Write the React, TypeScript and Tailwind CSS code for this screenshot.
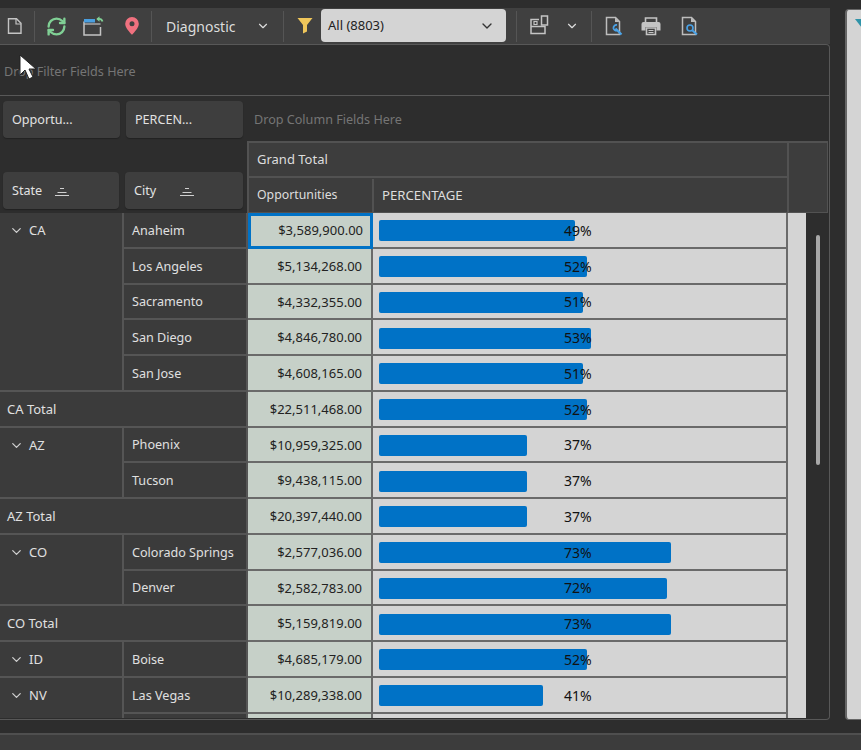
import { ChevronDown, RefreshCw } from "lucide-react";

const Groups = [
  { state: "CA", cities: [["Anaheim", "$3,589,900.00", 49], ["Los Angeles", "$5,134,268.00", 52], ["Sacramento", "$4,332,355.00", 51], ["San Diego", "$4,846,780.00", 53], ["San Jose", "$4,608,165.00", 51]], total: ["$22,511,468.00", 52], span: "row-span-5" },
  { state: "AZ", cities: [["Phoenix", "$10,959,325.00", 37], ["Tucson", "$9,438,115.00", 37]], total: ["$20,397,440.00", 37], span: "row-span-2" },
  { state: "CO", cities: [["Colorado Springs", "$2,577,036.00", 73], ["Denver", "$2,582,783.00", 72]], total: ["$5,159,819.00", 73], span: "row-span-2" },
  { state: "ID", cities: [["Boise", "$4,685,179.00", 52]], span: "row-span-1" },
  { state: "NV", cities: [["Las Vegas", "$10,289,338.00", 41], ["", "", 0]], span: "row-span-2" },
];

function Sep({ ml }: { ml: string }) {
  return <div className={`${ml} w-px h-[31px] bg-[#555555]`} />;
}

function DataCells({ amount, pct, selected }: { amount: string; pct: number; selected?: boolean }) {
  return (
    <>
      <div className={`flex items-center justify-end bg-[#c6d0c8] text-[#222222] text-[13px] ${selected ? "border-[3px] border-[#0072c6] pr-[7px]" : "border-b-2 border-r-2 border-[#6a6a6a] pt-[2px] pr-[9px]"}`}>
        {amount}
      </div>
      <div className="relative flex items-center pl-[6px] pt-[2px] bg-[#d4d4d4] border-b-2 border-r-2 border-[#6a6a6a]">
        {pct > 0 && <div className="h-[21px] rounded-[2px] bg-[#0072c6]" style={{ width: pct * 4 }} />}
        {pct > 0 && <span className="absolute left-[191px] text-[14px] leading-[20px] text-[#111111]">{pct}%</span>}
      </div>
    </>
  );
}

function FieldChip({ label, labelW, sort, w }: { label: string; labelW?: string; sort?: boolean; w: string }) {
  return (
    <div className={`${w} h-[37px] flex items-center pl-[9px] pt-[2px] rounded-[4px] bg-[#3e3e3e] shadow-[0_1px_1px_#222222] text-[#e2e2e2]`}>
      <span className={labelW}>{label}</span>
      {sort && (
        <svg width="16" height="10" viewBox="0 0 16 10" stroke="#d0d0d0" fill="none">
          <path d="M6 1.500h4M3.500 5.500h9M1 8.500h14" />
        </svg>
      )}
    </div>
  );
}

function DocIcon({ children }: { children: React.ReactNode }) {
  return (
    <svg width="20" height="20" viewBox="0 0 20 20" fill="none">
      <path d="M2.500 1.500h9l4 4v13h-13z" stroke="#bdbdbd" strokeWidth="1.500" />
      <path d="M11 1.500v4.500h4.500" fill="#bdbdbd" />
      {children}
    </svg>
  );
}

function Toolbar() {
  return (
    <div className="h-[36px] shrink-0 flex items-center bg-[#404040]">
      <svg width="20" height="20" viewBox="0 0 20 20" fill="none" className="ml-[5px]">
        <path d="M3.500 2.700h8l4.500 4.500v10.100h-12.500z" stroke="#c4c4c4" strokeWidth="1.400" />
        <path d="M11 3v5h5" stroke="#c4c4c4" strokeWidth="1.200" />
      </svg>
      <Sep ml="ml-[9px]" />
      <RefreshCw size={21} strokeWidth={2.700} className="ml-[11px] text-[#80d095]" />
      <svg width="21" height="21" viewBox="0 0 21 21" fill="none" className="ml-[16px]">
        <path d="M1 5.500v13.500h16.500v-8" stroke="#c4c4c4" strokeWidth="1.500" />
        <path d="M1 3h11v3.500h-11z" fill="#4a9fe0" />
        <path d="M1 8h16.500" stroke="#c4c4c4" strokeWidth="1.200" />
        <path d="M19.500 5.500c-.500-2-2.500-3-5-2.500" stroke="#80d095" strokeWidth="1.800" />
        <path d="M13.300 3l3.200-2.700v5.400z" fill="#80d095" />
      </svg>
      <svg width="20" height="20" viewBox="0 0 20 20" className="ml-[18px]">
        <path fillRule="evenodd" d="M10 1a6.800 6.800 0 0 0-6.800 6.800c0 3.900 4.200 8.300 6.800 11 2.600-2.700 6.800-7.100 6.800-11A6.800 6.800 0 0 0 10 1zm0 4.300a2.500 2.500 0 1 1 0 5 2.500 2.500 0 0 1 0-5z" fill="#f0717f" />
      </svg>
      <Sep ml="ml-[9px]" />
      <span className="ml-[14px] w-[90px] text-[14px] text-[#dddddd]">Diagnostic</span>
      <ChevronDown size={14} className="text-[#dddddd]" />
      <Sep ml="ml-[13px]" />
      <svg width="20" height="20" viewBox="0 0 20 20" className="ml-[11px] -mt-[2px]">
        <path d="M2.500 3h15l-5.500 7v6.500l-4 2v-8.500z" fill="#efc65a" />
      </svg>
      <div className="ml-[6px] w-[185px] h-[33px] -mt-[1px] flex items-center justify-between pl-[7px] pr-[11px] rounded-[4px] bg-[#d4d4d4] text-[13px] text-[#222222]">
        <span>All (8803)</span>
        <ChevronDown size={16} className="text-[#333333]" />
      </div>
      <Sep ml="ml-[10px]" />
      <svg width="20" height="20" viewBox="0 0 20 20" fill="none" stroke="#c4c4c4" strokeWidth="1.500" className="ml-[12px] -mt-[3px]">
        <path d="M10 4.500h-8v14h14v-7h-14" />
        <path d="M12.500 1h6v9h-6z" />
        <path d="M5 6.500h3v3h-3z" strokeWidth="1.200" />
      </svg>
      <ChevronDown size={14} className="ml-[16px] text-[#dddddd]" />
      <Sep ml="ml-[12px]" />
      <div className="ml-[12px]">
        <DocIcon>
          <path d="M17.500 18.500l-6-6" stroke="#4aa3e8" strokeWidth="2.200" />
          <path d="M13 9a3 3 0 0 0-3.500 3.500c.500 1.500 2 2.500 3.500 2" stroke="#4aa3e8" strokeWidth="1.800" />
        </DocIcon>
      </div>
      <svg width="20" height="20" viewBox="0 0 20 20" className="ml-[17px]" fill="none">
        <path d="M4.500 6v-4h11v4" stroke="#c4c4c4" strokeWidth="1.600" />
        <path d="M2.500 6h15a2 2 0 0 1 2 2v6.500h-4v-3.500h-11v3.500h-4v-6.500a2 2 0 0 1 2-2z" fill="#c4c4c4" />
        <path d="M5.500 12h9v6.500h-9z" stroke="#c4c4c4" strokeWidth="1.600" />
        <path d="M7.500 14.500h5M7.500 16.500h5" stroke="#c4c4c4" />
      </svg>
      <div className="ml-[19px]">
        <DocIcon>
          <circle cx="10" cy="12" r="3" stroke="#4aa3e8" strokeWidth="1.600" />
          <path d="M12.500 14.500l4.500 4" stroke="#4aa3e8" strokeWidth="2" />
        </DocIcon>
      </div>
    </div>
  );
}

export default function App() {
  return (
    <div className="relative w-[861px] h-[750px] overflow-hidden bg-[#2d2d2d] text-[12.6px] font-['Noto_Sans',sans-serif]">
      <div className="h-[8px]" />
      <div className="flex h-[712px]">
        <div className="w-[830px] shrink-0 flex flex-col">
          <Toolbar />
          <div className="flex-1 min-h-0 flex flex-col border-t border-r border-b border-[#585858] rounded-tr-[4px] rounded-br-[4px]">
            <div className="h-[51px] flex items-center pl-[4px] pt-[4px] shrink-0 border-b border-[#585858] text-[#757575]">
              Drop Filter Fields Here
            </div>
            <div className="h-[45px] shrink-0 flex items-center pl-[3px] pt-[2px] gap-[6px]">
              <FieldChip label="Opportu..." w="w-[117px]" />
              <FieldChip label="PERCEN..." w="w-[117px]" />
              <span className="ml-[5px] pt-[2px] text-[#757575]">Drop Column Fields Here</span>
            </div>

            <div className="h-[72px] shrink-0 flex">
              <div className="w-[247px] flex items-end pb-[4px] pl-[3px] gap-[6px]">
                <FieldChip label="State" labelW="w-[42px]" sort w="w-[116px]" />
                <FieldChip label="City" labelW="w-[45px]" sort w="w-[118px]" />
              </div>
              <div className="flex-1 mr-[1px] flex bg-[#3d3d3d] text-[#dddddd] border-t-2 border-l-2 border-b border-[#525252]">
                <div className="w-[540px] flex flex-col border-r-2 border-[#525252]">
                  <div className="h-[35px] flex items-center pl-[8px] text-[13px] border-b-2 border-[#525252]">Grand Total</div>
                  <div className="flex-1 flex pt-[1px]">
                    <div className="w-[125px] flex items-center pl-[8px] text-[12.3px] border-r-2 border-[#525252]">Opportunities</div>
                    <div className="flex items-center pl-[8px] text-[13.2px]">PERCENTAGE</div>
                  </div>
                </div>
                <div className="flex-1 border-r border-[#525252]" />
              </div>
            </div>

            <div className="flex-1 min-h-0 mb-[1px] flex overflow-hidden">
              <div className="w-[788px] grid grid-cols-[124px_124px_125px_415px] auto-rows-[35.75px] text-[#e0e0e0]">
                {Groups.map((g) => (
                  <div key={g.state} className="contents">
                    <div className={`${g.span} bg-[#3b3b3b] border-b-2 border-r-2 border-[#555555] flex items-start pt-[8px] pl-[9px]`}>
                      <ChevronDown size={15} className="mt-[2px] text-[#d0d0d0]" />
                      <span className="ml-[5px] text-[13px]">{g.state}</span>
                    </div>
                    {g.cities.map((c, i) => (
                      <div key={i} className="contents">
                        <div className="col-start-2 bg-[#3b3b3b] border-b-2 border-r-2 border-[#555555] flex items-center pl-[8px] pt-[3px]">{c[0]}</div>
                        <DataCells amount={c[1] as string} pct={c[2] as number} selected={c[0] === "Anaheim"} />
                      </div>
                    ))}
                    {g.total && (
                      <>
                        <div className="col-span-2 bg-[#3b3b3b] border-b-2 border-r-2 border-[#555555] flex items-center pl-[7px] pt-[2px] text-[13px]">{g.state} Total</div>
                        <DataCells amount={g.total[0] as string} pct={g.total[1] as number} />
                      </>
                    )}
                  </div>
                ))}
              </div>
              <div className="w-[18px] bg-[#d4d4d4]" />
              <div className="flex-1 pt-[22px] flex justify-center">
                <div className="w-[4px] h-[230px] rounded-[2px] bg-[#a8a8a8]" />
              </div>
            </div>
          </div>
        </div>
        <div className="ml-[15px] flex-1 min-w-0 overflow-hidden mt-[1px] bg-[#d4d4d4] border-l-2 border-t border-b border-[#666666] rounded-l-[4px]">
          <svg width="14" height="10" viewBox="0 0 14 10" className="ml-[8px] mt-[9px] max-w-none">
            <path d="M0 0h14l-7 9z" fill="#2f93a8" />
          </svg>
        </div>
      </div>
      <div className="h-[13px]" />
      <div className="h-[17px] bg-[#3c3c3c] border-t-2 border-[#4f4f4f]" />

      <svg width="20" height="28" viewBox="0 0 20 28" className="absolute left-[18px] top-[53px]">
        <path d="M2 2v20l5-5 4 9 4-2-4-8h7z" fill="#ffffff" stroke="#222222" strokeWidth="1" />
      </svg>
    </div>
  );
}
